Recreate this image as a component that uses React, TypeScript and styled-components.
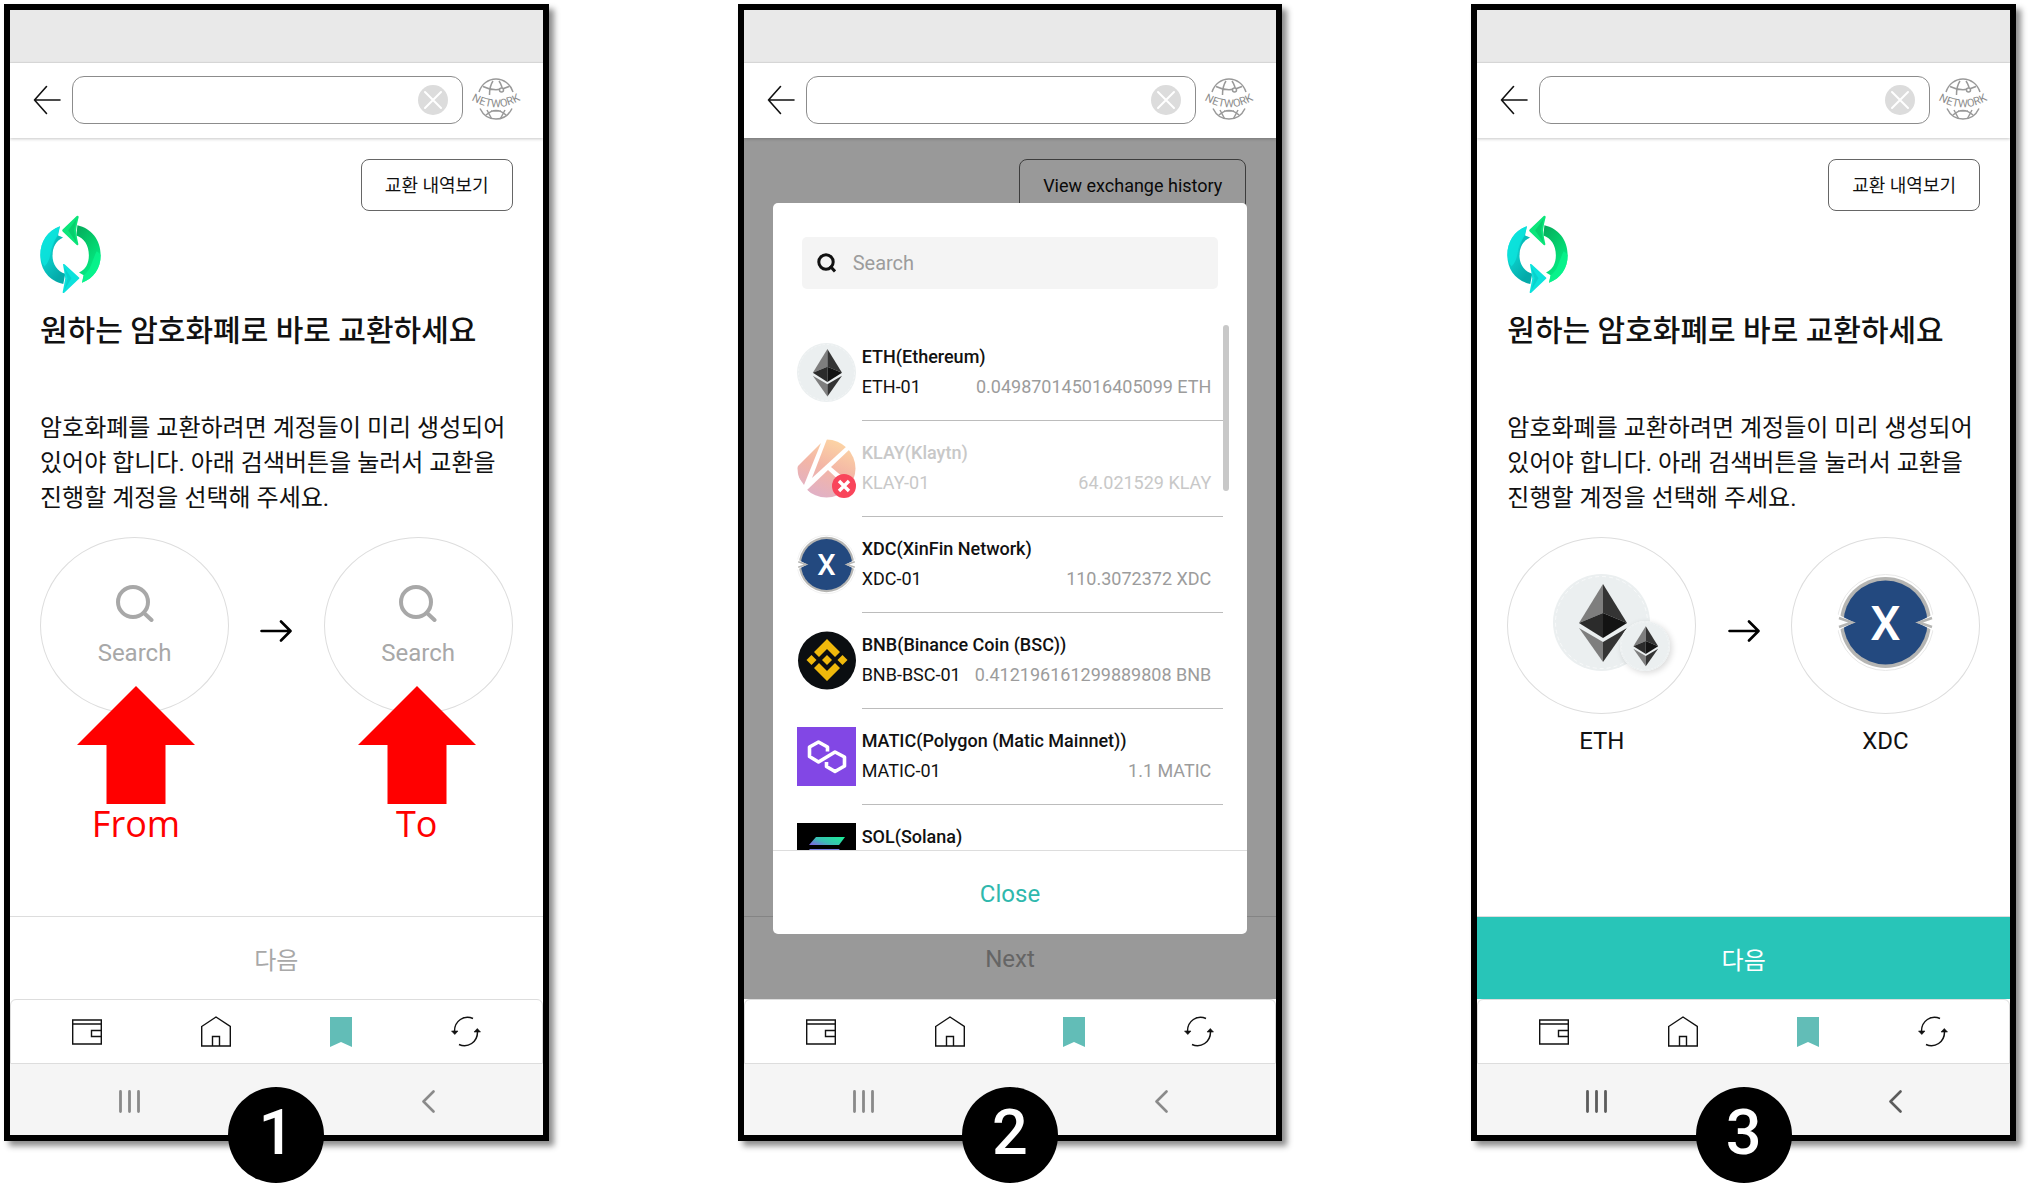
import React from "react";
import styled, { createGlobalStyle } from "styled-components";

const GlobalStyle = createGlobalStyle`
  *, *::before, *::after { box-sizing: border-box; }
  body {
    margin: 0;
    background: #fff;
    color: #111;
    font-family: Roboto, "Noto Sans CJK KR", sans-serif;
  }
  button, input { font: inherit; color: inherit; }
  button { padding: 0; border: 0; background: none; cursor: pointer; }
  h2, p, ul { margin: 0; padding: 0; }
  svg { display: block; flex: none; }
`;

const Page = styled.main`
  min-height: 100vh;
  display: grid;
  grid-template-columns: repeat(3, minmax(0, 1fr));
  gap: 189px;
  padding: 4px 13px 54px 4px;
`;

const Phone = styled.section`
  position: relative;
  display: flex;
  flex-direction: column;
  border: 6px solid #000;
  background: #fff;
  box-shadow: 5px 5px 6px rgba(0, 0, 0, 0.45);
`;

const StatusBar = styled.div`
  height: 53px;
  background: #e9e9e9;
  border-bottom: 1px solid #dedede;
`;

const Header = styled.header`
  position: relative;
  z-index: 1;
  display: flex;
  align-items: center;
  height: 75px;
  padding: 0 23px 1px;
  background: #fff;
  box-shadow: 0 1px 3px rgba(0, 0, 0, 0.22);
`;

const AddressBox = styled.div`
  flex: 1;
  min-width: 0;
  display: flex;
  align-items: center;
  height: 48px;
  margin: 0 9px 0 11px;
  padding: 0 14px;
  border: 1px solid #8c8c8c;
  border-radius: 12px;
`;

const AddressInput = styled.input`
  flex: 1;
  min-width: 0;
  border: 0;
  outline: 0;
  background: transparent;
  font-size: 18px;
`;

const Screen = styled.div`
  position: relative;
  flex: 1;
  display: flex;
  flex-direction: column;
`;

const Content = styled.div`
  flex: 1;
  display: flex;
  flex-direction: column;
  padding: 21px 30px;
`;

const HistoryButton = styled.button`
  align-self: flex-end;
  height: 52px;
  padding: 1px 23px 0;
  border: 1px solid #666;
  border-radius: 8px;
  font-size: 18px;
  line-height: 24px;
`;

const Logo = styled.svg`
  margin-top: 4px;
`;

const Title = styled.h2`
  margin-top: 18px;
  font-size: 30px;
  line-height: 40px;
  font-weight: 500;
  white-space: nowrap;
`;

const Description = styled.p`
  margin-top: 60px;
  font-size: 24px;
  line-height: 35px;
  word-break: keep-all;
`;

const Pair = styled.div`
  position: relative;
  display: flex;
  justify-content: space-between;
  margin-top: 21px;
`;

const PairArrow = styled.svg`
  margin-top: 83px;
`;

const CoinChoice = styled.div`
  display: flex;
  flex-direction: column;
  align-items: center;
`;

const CoinCircle = styled.button<{ $top: number }>`
  display: flex;
  flex-direction: column;
  align-items: center;
  justify-content: flex-start;
  gap: 16px;
  width: 189px;
  height: 177px;
  padding-top: ${(p) => p.$top}px;
  border: 1px solid #ddd;
  border-radius: 50%;
  color: #a8a8a8;
  font-size: 24px;
  line-height: 30px;
`;

const CoinLabel = styled.span`
  margin-top: 12px;
  font-size: 24px;
  line-height: 30px;
`;

const CoinBadgeWrap = styled.span`
  position: relative;
  display: block;
`;

const CoinBadge = styled.span`
  position: absolute;
  left: 67px;
  top: 47px;
  border-radius: 50%;
  background: #fff;
  box-shadow: 2px 2px 6px rgba(0, 0, 0, 0.15);
`;

const Callout = styled.div<{ $side: "left" | "right" }>`
  position: absolute;
  top: 149px;
  ${(p) => p.$side}: 37px;
  display: flex;
  flex-direction: column;
  align-items: center;
  color: #f00;
  font-family: "Open Sans", sans-serif;
  font-size: 36px;
  line-height: 40px;
`;

const NextButton = styled.button<{ $active?: boolean }>`
  height: 83px;
  padding-top: 1px;
  border-top: 1px solid #ddd;
  background: ${(p) => (p.$active ? "#28c5b8" : "#fff")};
  color: ${(p) => (p.$active ? "#fff" : "#a8a8a8")};
  font-size: 24px;
`;

const TabBar = styled.nav`
  display: flex;
  align-items: center;
  justify-content: space-between;
  height: 65px;
  padding: 0 61px;
  border: 1px solid #ddd;
  border-radius: 6px 6px 0 0;
`;

const SystemBar = styled.div<{ $dark?: boolean }>`
  display: flex;
  justify-content: space-between;
  align-items: center;
  height: 71px;
  padding: 3px 108px 0;
  background: #f5f5f5;
  color: ${(p) => (p.$dark ? "#5c5c5c" : "#8a8a8a")};
`;

const StepNumber = styled.div`
  position: absolute;
  left: 50%;
  bottom: -48px;
  width: 96px;
  height: 96px;
  margin-left: -48px;
  padding-bottom: 4px;
  display: flex;
  align-items: center;
  justify-content: center;
  border-radius: 50%;
  background: #000;
  color: #fff;
  font-size: 63px;
  font-weight: 500;
  line-height: 64px;
`;

const Overlay = styled.div`
  position: absolute;
  inset: 0;
  display: flex;
  padding: 65px 29px;
  background: rgba(0, 0, 0, 0.4);
`;

const Modal = styled.div`
  flex: 1;
  min-width: 0;
  display: flex;
  flex-direction: column;
  padding-top: 34px;
  border-radius: 5px;
  background: #fff;
`;

const SearchField = styled.label`
  display: flex;
  align-items: center;
  gap: 17px;
  height: 52px;
  margin: 0 29px 36px;
  padding: 0 15px;
  border-radius: 5px;
  background: #f4f4f4;
`;

const SearchInput = styled.input`
  flex: 1;
  min-width: 0;
  padding: 0;
  border: 0;
  outline: 0;
  background: transparent;
  font-size: 20px;
  &::placeholder { color: #9c9c9c; opacity: 1; }
`;

const ListArea = styled.div`
  position: relative;
  flex: 1 1 0;
  min-height: 0;
  padding: 0 24px;
  overflow: hidden;
`;

const ScrollThumb = styled.div`
  position: absolute;
  top: 0;
  right: 18px;
  width: 6px;
  height: 166px;
  border-radius: 3px;
  background: #c8c8c8;
`;

const AccountList = styled.ul`
  list-style: none;
`;

const AccountRow = styled.button<{ $disabled?: boolean }>`
  display: flex;
  align-items: flex-start;
  gap: 6px;
  width: 100%;
  text-align: left;
  font-size: 18px;
  line-height: 30px;
  color: ${(p) => (p.$disabled ? "#c8c8c8" : "#111")};
`;

const RowIcon = styled.span`
  padding-top: 18px;
`;

const RowBody = styled.span`
  flex: 1;
  min-width: 0;
  display: flex;
  flex-direction: column;
  padding: 17px 12px 18px 0;
  border-bottom: 1px solid #bcbcbc;
`;

const RowName = styled.span`
  font-weight: 500;
`;

const RowDetail = styled.span`
  display: flex;
  justify-content: space-between;
  white-space: nowrap;
`;

const Amount = styled.span<{ $disabled?: boolean }>`
  color: ${(p) => (p.$disabled ? "#c8c8c8" : "#9c9c9c")};
`;

const CloseButton = styled.button`
  height: 84px;
  padding-top: 2px;
  border-top: 1px solid #ddd;
  color: #2fb8ad;
  font-size: 24px;
`;

const BackIcon = () => (
  <svg width="28" height="30" viewBox="0 0 28 30" fill="none" stroke="#111" strokeWidth="1.6">
    <path d="M13.5 1.5 1.5 15l12 13.5M1.5 15H27" strokeLinecap="round" strokeLinejoin="round" />
  </svg>
);

const ClearIcon = () => (
  <svg width="30" height="30" viewBox="0 0 30 30">
    <circle cx="15" cy="15" r="15" fill="#dcdcdc" />
    <path d="m7 7 16 16M23 7 7 23" stroke="#fff" strokeWidth="2" strokeLinecap="round" />
  </svg>
);

const NetworkIcon = ({ id }: { id: string }) => (
  <svg width="48" height="42" viewBox="0 0 48 42" fill="none" stroke="#999" strokeWidth="1.5" overflow="visible">
    <path d="M7 13A18 19.5 0 0 1 41 13M8 29.5A18 19.5 0 0 0 40 29.5" />
    <path d="M11 7.500Q24 14 37 7.500M21 2Q17.500 7 17.500 16M27 2Q30.500 7 30.500 13" />
    <path d="M14 36Q24 27 34 36M15 31 19.500 39.500M33 31 28.500 39.500M19 32h10" />
    <circle cx="29.500" cy="11" r="2" fill="#fff" />
    <path id={id} d="M-3 19.500Q24 37 51 19.500" stroke="none" />
    <text fill="#8c8c8c" stroke="none" fontFamily="'Liberation Sans Narrow', Roboto, sans-serif" fontSize="11" textAnchor="middle">
      <textPath href={`#${id}`} startOffset="50%">NETWORK</textPath>
    </text>
  </svg>
);

const ExchangeLogo = ({ id }: { id: string }) => (
  <Logo width="61" height="78" viewBox="27 28 186 236" preserveAspectRatio="none" aria-hidden="true">
    <defs>
      <linearGradient id={`${id}-blue`} x1="0" y1="0" x2="0.5" y2="1">
        <stop offset="0" stopColor="#07e3e0" />
        <stop offset="0.5" stopColor="#0bd0cc" />
        <stop offset="1" stopColor="#04aaa9" />
      </linearGradient>
      <linearGradient id={`${id}-green`} x1="0" y1="0" x2="0.5" y2="1">
        <stop offset="0" stopColor="#05a85a" />
        <stop offset="0.5" stopColor="#04cf6c" />
        <stop offset="1" stopColor="#04f08a" />
      </linearGradient>
    </defs>
    <path d="M88 62C50 75 28 108 28 150c0 45 28 78 70 87l6-31C80 199 65 178 65 150c0-24 10-44 32-54L82 90Z" fill={`url(#${id}-blue)`} />
    <path d="M88 62C50 75 28 108 28 150c2 14 6 25 13 34 10-12 16-20 20-52 4-16 10-30 18-40Z" fill="#0ce6dd" opacity="0.75" />
    <path d="M65 150c0-24 10-44 32-54L82 90c-10 14-18 34-19 60Z" fill="#06a4a4" opacity="0.45" />
    <path d="M97 177q2-2 5 0l44 40q2 2 0 4l-45 42q-4 3-5-1 4-20 8-42-3-22-7-43Z" fill="#0ce2dc" />
    <path d="m99 184 24 35-21 35 9-35Z" fill="#06bcb9" opacity="0.45" />
    <path d="M141 59c42 9 71 44 71 91 0 40-21 70-57 83l5-23-14-8c20-8 30-27 30-52 0-31-15-52-38-60Z" fill={`url(#${id}-green)`} />
    <path d="M212 150c0 40-21 70-57 83l5-23c24-16 24-42 40-72q9 4 12 12Z" fill="#08f58e" opacity="0.75" />
    <path d="M145 34q-1-6-6-3L96 72q-3 3 0 6l43 41q5 2 5-3-5-19-7-41 2-20 8-41Z" fill="#0be57a" />
    <path d="m138 40-25 35 25 36-7-36Z" fill="#04b35e" opacity="0.45" />
  </Logo>
);

const SearchIcon = () => (
  <svg width="38" height="37" viewBox="0 0 38 37" fill="none" stroke="#a8a8a8" strokeWidth="4" strokeLinecap="round">
    <ellipse cx="17" cy="17" rx="15" ry="15" />
    <path d="m28 28 7.500 7" />
  </svg>
);

const SmallSearchIcon = () => (
  <svg width="19" height="20" viewBox="0 0 19 20" fill="none" stroke="#111" strokeWidth="3">
    <circle cx="9" cy="9" r="7.200" />
    <path d="m13 13 5 5.500" />
  </svg>
);

const ArrowIcon = () => (
  <PairArrow width="32" height="22" viewBox="0 0 32 22" fill="none" stroke="#000" strokeWidth="2.6" strokeLinecap="round" strokeLinejoin="round">
    <path d="M1.500 11H30M21 1.500 30.500 11 21 20.500" />
  </PairArrow>
);

const RedArrow = () => (
  <svg width="118" height="118" viewBox="0 0 118 118">
    <path d="M59 0 118 59H88.500V118H29.500V59H0Z" fill="#f00" />
  </svg>
);

const EthIcon = ({ size }: { size: number }) => (
  <svg width={size} height={size} viewBox="0 0 97 97">
    <circle cx="48.500" cy="48.500" r="48.500" fill="#ebeff0" />
    <circle cx="48.500" cy="48.500" r="46" fill="none" stroke="#fff" strokeOpacity="0.6" strokeDasharray="4 3" />
    <path d="M50 10 26 49l24-10Z" fill="#7e7e7e" />
    <path d="M50 10v29l24 10Z" fill="#343434" />
    <path d="M26 49l24-10v25Z" fill="#2b2b2b" />
    <path d="M74 49 50 39v25Z" fill="#131313" />
    <path d="M26 54l24 14v20Z" fill="#7e7e7e" />
    <path d="M74 54 50 68v20Z" fill="#343434" />
  </svg>
);

const KlayIcon = () => (
  <svg width="59" height="59" viewBox="0 0 59 59">
    <defs>
      <linearGradient id="klay" gradientUnits="userSpaceOnUse" x1="42" y1="0" x2="18" y2="59">
        <stop offset="0" stopColor="#fdd6a4" />
        <stop offset="0.5" stopColor="#f3b5a6" />
        <stop offset="1" stopColor="#dfb0c8" />
      </linearGradient>
      <clipPath id="klay-clip"><circle cx="29.500" cy="29.500" r="29" /></clipPath>
    </defs>
    <g clipPath="url(#klay-clip)">
      <path d="M0 28 24 4 7 46 0 36Z" fill="url(#klay)" />
      <path d="M30 0h12l8 7L15 39Z" fill="url(#klay)" />
      <path d="M53 10 34 28l25 21V20Z" fill="url(#klay)" />
      <path d="M31 31 10 51l8 8h30V47Z" fill="url(#klay)" />
    </g>
    <circle cx="47" cy="47" r="12" fill="#f9455b" />
    <path d="m42 42 10 10M52 42 42 52" stroke="#fff" strokeWidth="3.4" />
  </svg>
);

const XdcIcon = ({ size }: { size: number }) => (
  <svg width={size} height={size} viewBox="0 0 97 97">
    <circle cx="48.500" cy="48.500" r="48" fill="#fff" stroke="#e8e8e8" />
    <circle cx="48.500" cy="48.500" r="45.500" fill="#b5b5b3" />
    <circle cx="48.500" cy="48.500" r="42" fill="#23497f" />
    <path d="M0 40 17 48.500 0 57Z" fill="#fff" />
    <path d="M97 40 80 48.500 97 57Z" fill="#fff" />
    <path d="M2 44 15 48.500 2 53M95 44 82 48.500 95 53" fill="none" stroke="#b5b5b3" strokeWidth="2.500" />
    <text x="48.500" y="66" fill="#fff" fontFamily="Roboto, sans-serif" fontWeight="500" fontSize="48" textAnchor="middle">X</text>
  </svg>
);

const BnbIcon = () => (
  <svg width="59" height="59" viewBox="0 0 59 59">
    <circle cx="30" cy="29.500" r="29" fill="#0b0e11" />
    <g fill="#f0b90b">
      <path d="m30 8 13 13-5 5-8-8-8 8-5-5Z" />
      <path d="m30 50 13-13-5-5-8 8-8-8-5 5Z" />
      <path d="m30 24 5 5-5 5-5-5Z" />
      <path d="m14.500 24 5 5-5 5-5-5Z" />
      <path d="m45.500 24 5 5-5 5-5-5Z" />
    </g>
  </svg>
);

const MaticIcon = () => (
  <svg width="59" height="59" viewBox="0 0 59 59">
    <path d="M0 0h59v59H0Z" fill="#8247e5" />
    <path
      d="M30.500 24.500V20L21.500 15 12.500 20v9.500l9 5.500L38 25l9.500 5v9L38 44.500 29.500 39.500V35"
      fill="none"
      stroke="#fff"
      strokeWidth="3.600"
      strokeLinejoin="round"
    />
  </svg>
);

const SolIcon = () => (
  <svg width="59" height="59" viewBox="0 0 59 59">
    <defs>
      <linearGradient id="sol" x1="0" y1="0.8" x2="1" y2="0.2">
        <stop offset="0" stopColor="#7a6ae0" />
        <stop offset="0.4" stopColor="#3cbcb5" />
        <stop offset="1" stopColor="#1eeb9a" />
      </linearGradient>
    </defs>
    <path d="M0 0h59v59H0Z" fill="#000" />
    <path d="M19 14h29l-6 8H12Z" fill="url(#sol)" />
    <path d="M12 26h30l6 8H19Z" fill="#7a7fe0" />
    <path d="M19 38h29l-6 8H12Z" fill="#9a5cf0" />
  </svg>
);

const WalletIcon = () => (
  <svg width="30" height="26" viewBox="0 0 30 26" fill="none" stroke="#111" strokeWidth="1.400">
    <path d="M.7 1h28.600v24H.7ZM.7 5h28.600M29 11.500h-9.500v6H29" />
  </svg>
);

const HomeIcon = () => (
  <svg width="30" height="31" viewBox="0 0 30 31" fill="none" stroke="#111" strokeWidth="1.400">
    <path d="M.7 10.500 15 1l14.300 9.500V30H.7ZM11.500 30V20.500h7V30" />
  </svg>
);

const BookmarkIcon = () => (
  <svg width="22" height="30" viewBox="0 0 22 30">
    <path d="M0 0h22v30l-11-5L0 30Z" fill="#62bdb7" />
  </svg>
);

const RefreshIcon = () => (
  <svg width="30" height="31" viewBox="0 0 30 31" fill="none" stroke="#111" strokeWidth="1.500">
    <path d="M22 2.500C13-1.500 3.500 5 3.500 15M8 28.500C17 32.500 26.500 26 26.500 16" />
    <path d="M.5 15h6.500l-3.200 3.500ZM23 16h6.500L26.300 12.500Z" fill="#111" stroke="#111" strokeWidth=".6" />
  </svg>
);

const RecentsIcon = () => (
  <svg width="22" height="23" viewBox="0 0 22 23" stroke="currentColor" strokeWidth="2.800" strokeLinecap="round">
    <path d="M2.500 1.500v20M11.500 1.500v20M20.500 1.500v20" />
  </svg>
);

const ChevronIcon = () => (
  <svg width="13" height="23" viewBox="0 0 13 23" fill="none" stroke="currentColor" strokeWidth="2.600" strokeLinecap="round" strokeLinejoin="round">
    <path d="M11.500 1.500 1.500 11.500l10 10" />
  </svg>
);

type Account = {
  name: string;
  account: string;
  amount: string;
  icon: React.ReactNode;
  disabled?: boolean;
};

const accounts: Account[] = [
  { name: "ETH(Ethereum)", account: "ETH-01", amount: "0.049870145016405099 ETH", icon: <EthIcon size={59} /> },
  { name: "KLAY(Klaytn)", account: "KLAY-01", amount: "64.021529 KLAY", icon: <KlayIcon />, disabled: true },
  { name: "XDC(XinFin Network)", account: "XDC-01", amount: "110.3072372 XDC", icon: <XdcIcon size={59} /> },
  { name: "BNB(Binance Coin (BSC))", account: "BNB-BSC-01", amount: "0.412196161299889808 BNB", icon: <BnbIcon /> },
  { name: "MATIC(Polygon (Matic Mainnet))", account: "MATIC-01", amount: "1.1 MATIC", icon: <MaticIcon /> },
  { name: "SOL(Solana)", account: "", amount: "", icon: <SolIcon /> },
];

const Intro = ({ id }: { id: string }) => (
  <>
    <ExchangeLogo id={id} />
    <Title>원하는 암호화폐로 바로 교환하세요</Title>
    <Description>
      암호화폐를 교환하려면 계정들이 미리 생성되어
      <br />
      있어야 합니다. 아래 검색버튼을 눌러서 교환을
      <br />
      진행할 계정을 선택해 주세요.
    </Description>
  </>
);

const SearchChoice = () => (
  <CoinChoice>
    <CoinCircle type="button" $top={47}>
      <SearchIcon />
      Search
    </CoinCircle>
  </CoinChoice>
);

const AccountPicker = () => (
  <Overlay>
    <Modal role="dialog" aria-label="Search">
      <SearchField>
        <SmallSearchIcon />
        <SearchInput type="text" placeholder="Search" aria-label="Search" />
      </SearchField>
      <ListArea>
        <AccountList>
          {accounts.map((a) => (
            <li key={a.name}>
              <AccountRow type="button" $disabled={a.disabled} disabled={a.disabled}>
                <RowIcon>{a.icon}</RowIcon>
                <RowBody>
                  <RowName>{a.name}</RowName>
                  <RowDetail>
                    <span>{a.account}</span>
                    <Amount $disabled={a.disabled}>{a.amount}</Amount>
                  </RowDetail>
                </RowBody>
              </AccountRow>
            </li>
          ))}
        </AccountList>
        <ScrollThumb />
      </ListArea>
      <CloseButton type="button">Close</CloseButton>
    </Modal>
  </Overlay>
);

type FrameProps = {
  step: number;
  next: string;
  active?: boolean;
  overlay?: React.ReactNode;
  children: React.ReactNode;
};

const PhoneFrame = ({ step, next, active, overlay, children }: FrameProps) => (
  <Phone>
    <StatusBar />
    <Header>
      <button type="button" aria-label="Back"><BackIcon /></button>
      <AddressBox>
        <AddressInput type="text" aria-label="Address" />
        <button type="button" aria-label="Clear"><ClearIcon /></button>
      </AddressBox>
      <button type="button" aria-label="Network"><NetworkIcon id={`network-${step}`} /></button>
    </Header>
    <Screen>
      <Content>{children}</Content>
      <NextButton type="button" $active={active}>{next}</NextButton>
      {overlay}
    </Screen>
    <TabBar>
      <button type="button" aria-label="Wallet"><WalletIcon /></button>
      <button type="button" aria-label="Home"><HomeIcon /></button>
      <button type="button" aria-label="Bookmark"><BookmarkIcon /></button>
      <button type="button" aria-label="Exchange"><RefreshIcon /></button>
    </TabBar>
    <SystemBar $dark={active}>
      <RecentsIcon />
      <ChevronIcon />
    </SystemBar>
    <StepNumber>{step}</StepNumber>
  </Phone>
);

export default function App() {
  return (
    <>
      <GlobalStyle />
      <Page>
        <PhoneFrame step={1} next="다음">
          <HistoryButton type="button">교환 내역보기</HistoryButton>
          <Intro id="logo-1" />
          <Pair>
            <SearchChoice />
            <ArrowIcon />
            <SearchChoice />
            <Callout $side="left"><RedArrow />From</Callout>
            <Callout $side="right"><RedArrow />To</Callout>
          </Pair>
        </PhoneFrame>

        <PhoneFrame step={2} next="Next" overlay={<AccountPicker />}>
          <HistoryButton type="button">View exchange history</HistoryButton>
        </PhoneFrame>

        <PhoneFrame step={3} next="다음" active>
          <HistoryButton type="button">교환 내역보기</HistoryButton>
          <Intro id="logo-3" />
          <Pair>
            <CoinChoice>
              <CoinCircle type="button" $top={36} aria-label="ETH">
                <CoinBadgeWrap>
                  <EthIcon size={97} />
                  <CoinBadge><EthIcon size={50} /></CoinBadge>
                </CoinBadgeWrap>
              </CoinCircle>
              <CoinLabel>ETH</CoinLabel>
            </CoinChoice>
            <ArrowIcon />
            <CoinChoice>
              <CoinCircle type="button" $top={36} aria-label="XDC"><XdcIcon size={97} /></CoinCircle>
              <CoinLabel>XDC</CoinLabel>
            </CoinChoice>
          </Pair>
        </PhoneFrame>
      </Page>
    </>
  );
}
